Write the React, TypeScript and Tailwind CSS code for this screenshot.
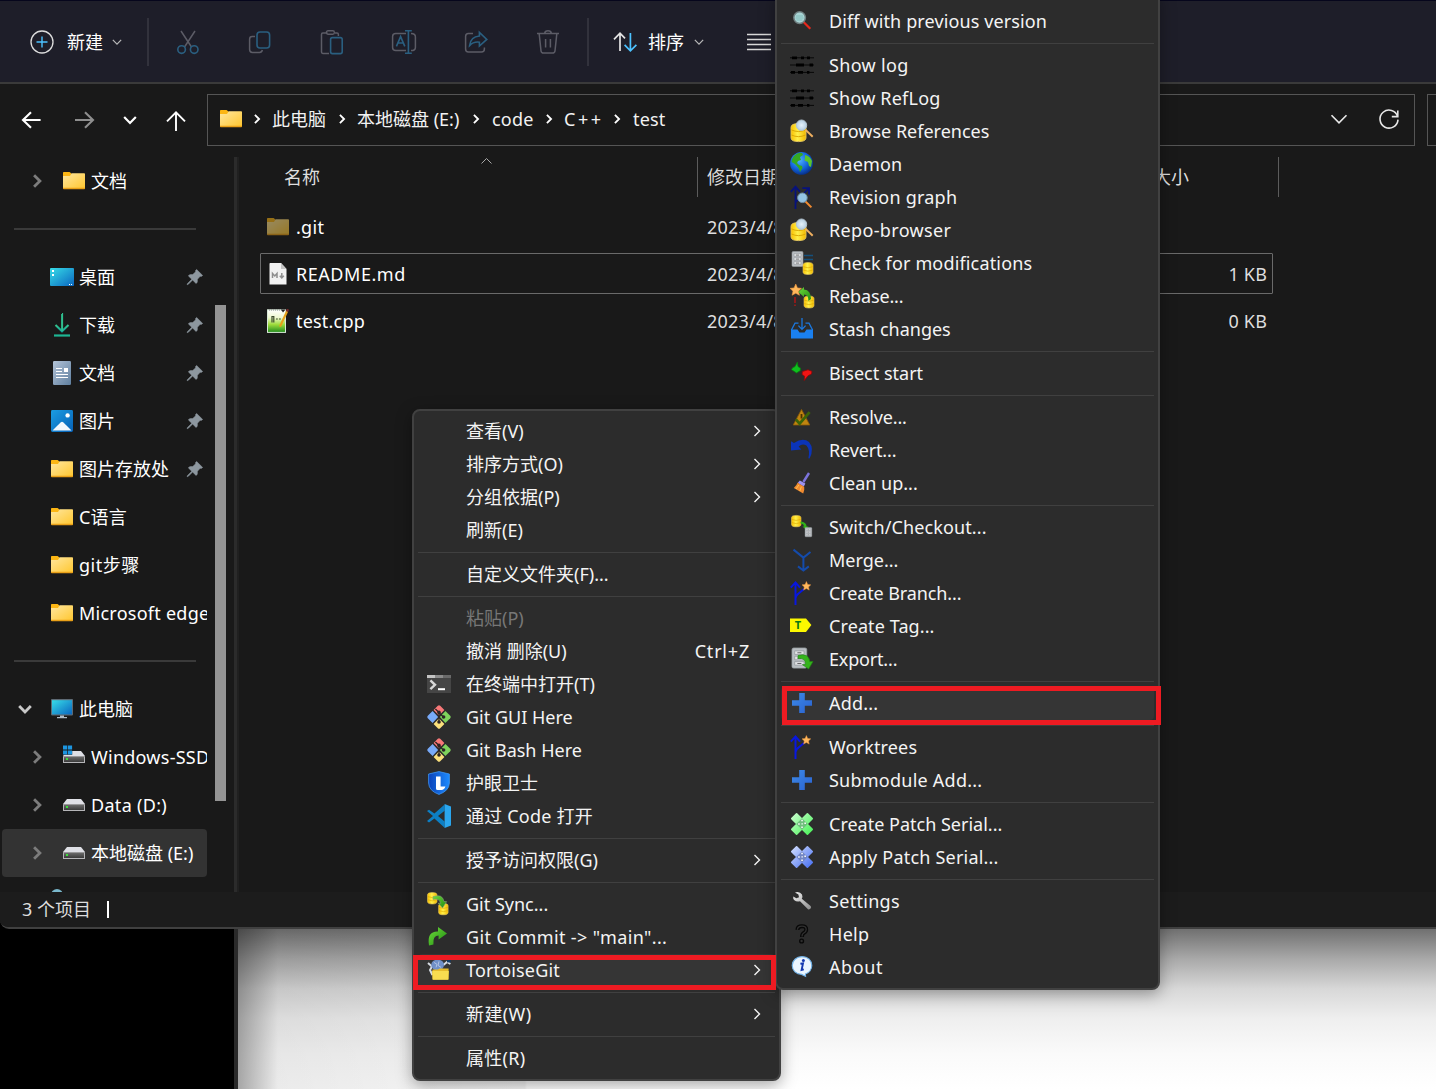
import React from "react";

type IconProps = { className?: string };

function Svg({ children, className = "", box = "0 0 24 24" }: { children: React.ReactNode; className?: string; box?: string }) {
  return (
    <svg viewBox={box} fill="none" className={`shrink-0 overflow-visible ${className || "h-6 w-6"}`}>
      {children}
    </svg>
  );
}

function Gradients() {
  return (
    <svg className="absolute h-0 w-0">
      <defs>
        <linearGradient id="folder" x1="0" y1="0" x2="1" y2="1"><stop offset="0" stopColor="#ffe7a0" /><stop offset="1" stopColor="#ffc730" /></linearGradient>
        <linearGradient id="cyan" x1="0" y1="0" x2="1" y2="1"><stop offset="0" stopColor="#37dde8" /><stop offset="1" stopColor="#0a66c0" /></linearGradient>
        <linearGradient id="gold" x1="0" y1="0" x2="1" y2="0"><stop offset="0" stopColor="#f8c000" /><stop offset=".45" stopColor="#fff04a" /><stop offset="1" stopColor="#f0b800" /></linearGradient>
        <linearGradient id="doc" x1="0" y1="0" x2="1" y2="1"><stop offset="0" stopColor="#b4c4d8" /><stop offset="1" stopColor="#5f7f9f" /></linearGradient>
        <linearGradient id="sky" x1="0" y1="0" x2="1" y2="1"><stop offset="0" stopColor="#1b9de2" /><stop offset="1" stopColor="#0560b6" /></linearGradient>
        <linearGradient id="down" x1="0" y1="0" x2="0" y2="1"><stop offset="0" stopColor="#35c58c" /><stop offset="1" stopColor="#12a79c" /></linearGradient>
        <radialGradient id="globe" cx=".4" cy=".35" r=".7"><stop offset="0" stopColor="#4fb4ff" /><stop offset=".6" stopColor="#1160d8" /><stop offset="1" stopColor="#062a7c" /></radialGradient>
        <radialGradient id="lens"><stop offset="0" stopColor="#e6f2fa" /><stop offset="1" stopColor="#b4cde0" /></radialGradient>
        <linearGradient id="leaf" x1="0" y1="0" x2="1" y2="1"><stop offset="0" stopColor="#6fdc3c" /><stop offset="1" stopColor="#1e8a10" /></linearGradient>
        <linearGradient id="drive" x1="0" y1="0" x2="0" y2="1"><stop offset="0" stopColor="#6d6d6d" /><stop offset="1" stopColor="#3a3a3a" /></linearGradient>
        <linearGradient id="notepad" x1="0" y1="0" x2="0" y2="1"><stop offset="0" stopColor="#ffffff" /><stop offset=".35" stopColor="#eef8d0" /><stop offset=".65" stopColor="#9edc3c" /><stop offset="1" stopColor="#1f8a1c" /></linearGradient>
        <linearGradient id="shield" x1="0" y1="0" x2="1" y2="0"><stop offset="0" stopColor="#0b42b8" /><stop offset="1" stopColor="#1d8bff" /></linearGradient>
        <linearGradient id="plus" x1="0" y1="0" x2="1" y2="1"><stop offset="0" stopColor="#3d8ae8" /><stop offset="1" stopColor="#2a62cf" /></linearGradient>
        <linearGradient id="greenPatch" x1="0" y1="0" x2="24" y2="24" gradientUnits="userSpaceOnUse"><stop offset="0" stopColor="#d4ffd8" /><stop offset="1" stopColor="#3cf04c" /></linearGradient>
        <linearGradient id="bluePatch" x1="0" y1="0" x2="24" y2="24" gradientUnits="userSpaceOnUse"><stop offset="0" stopColor="#dce6ff" /><stop offset="1" stopColor="#3c66f0" /></linearGradient>
        <linearGradient id="wrench" x1="0" y1="0" x2="1" y2="1"><stop offset="0" stopColor="#f2f2f2" /><stop offset="1" stopColor="#8c8c8c" /></linearGradient>
      </defs>
    </svg>
  );
}

/* ---------- explorer icons ---------- */

const Folder = ({ className = "" }: IconProps) => (
  <Svg className={`h-[18px] w-[22px] ${className}`} box="0 0 22 18">
    <path d="M0 .8Q0 0 .8 0H6.6L8.4 1.4V5H0Z" fill="#fcb614" />
    <path d="M0 4H7L8.6 1.2H21.2Q22 1.2 22 2V16.4H0Z" fill="url(#folder)" />
    <path d="M0 15.8H22V16.6Q22 17.2 21.2 17.2H.8Q0 17.2 0 16.6Z" fill="#e9a018" />
  </Svg>
);
const Desktop = () => (
  <Svg className="h-[18px] w-6" box="0 0 24 18">
    <rect width="24" height="18" rx="1" fill="url(#cyan)" />
    <path d="M2 2h2v2H2zM2 6h2v2H2zM19 16h1v1h-1zM21 16h1v1h-1z" fill="#fff" />
  </Svg>
);
const Download = () => (
  <Svg>
    <path d="M5.5 12L12 18.3L18.5 12" stroke="url(#down)" strokeWidth="2" />
    <path d="M12 1h.1V18" stroke="#2fbf8f" strokeWidth="2" />
    <path d="M4 22.5H20" stroke="#1db593" strokeWidth="2.2" />
  </Svg>
);
const Doc = () => (
  <Svg>
    <rect x="3" width="18" height="24" rx="1.2" fill="url(#doc)" />
    <path d="M6 7.5h6M6 10.5h6M6 13.5h12M6 16.5h12" stroke="#fff" strokeWidth="1" />
    <path d="M14 7h4v4h-4z" fill="#fff" />
  </Svg>
);
const Picture = () => (
  <Svg className="h-[22px] w-[22px]" box="0 0 22 22">
    <rect width="22" height="22" rx="1.4" fill="url(#sky)" />
    <path d="M1.5 20.6L9.8 12.2Q11 11.2 12.2 12.2L20.5 20.6Z" fill="#f2f8fd" />
    <circle cx="16.6" cy="5.4" r="2.2" fill="#fff" />
  </Svg>
);
const Monitor = () => (
  <Svg className="h-5 w-[22px]" box="0 0 22 20">
    <rect width="22" height="16.4" rx=".8" fill="#5e6a74" />
    <rect x="1" y="1.2" width="20" height="14.2" fill="url(#cyan)" />
    <path d="M9 16.4h4v1.6h3v1.2H6V18h3z" fill="#b0bcc6" />
  </Svg>
);
const Drive = ({ win }: { win?: boolean }) => (
  <Svg className="h-[18px] w-[22px]" box="0 0 22 18">
    <path d="M4 3H18L22 8H0Z" fill="#dfe0e6" />
    <rect y="8" width="22" height="7" rx=".6" fill="#b5b5b8" />
    <rect x="1" y="8.6" width="20" height="5.4" fill="url(#drive)" />
    <rect x="3" y="10" width="2" height="2" fill="#3ae03a" />
    {win && (
      <>
        <path d="M0 -2.6h9.2v9.4H0z" fill="#1a1a1a" />
        <path d="M0 -2.6h4.2v4.2H0zM4.9 -2.6h4.2v4.2H4.9zM0 2.4h4.2v4.2H0zM4.9 2.4h4.2v4.2H4.9z" fill="#1c95e0" />
      </>
    )}
  </Svg>
);
const Pin = () => (
  <Svg className="h-4 w-4" box="0 0 16 16">
    <path d="M9.6 .5L15.6 6.4 14.2 7.4 13.2 7.2 10.4 10.2 10.2 13.4 9 14.4 5.6 11 1 15.6 .2 15.6 .2 14.9 4.8 10.2 1.4 6.9 2.6 5.7 5.8 5.5 8.7 2.8 8.6 1.5Z" fill="#8d979f" stroke="#8d979f" strokeWidth=".6" />
  </Svg>
);
const Markdown = () => (
  <Svg className="h-[22px] w-[18px]" box="0 0 18 22">
    <path d="M1 0H12L17.5 6V21.5H.5V.8Z" fill="#f1f1f1" />
    <path d="M12 0V6H17.5Z" fill="#c4c4c4" />
    <path d="M3.5 15V10.5L5.8 13L8 10.5V15M12.8 10V14.5M10.8 12.8L12.8 15L14.8 12.8" stroke="#8e8e8e" strokeWidth="1.5" />
  </Svg>
);
const CppFile = () => (
  <Svg className="h-6 w-[22px]" box="0 0 22 24">
    <rect x=".5" y=".8" width="18" height="22.6" fill="url(#notepad)" stroke="#d8e8d8" />
    <path d="M2 1h13" stroke="#8a8a8a" strokeWidth="1" strokeDasharray="1 1" />
    <path d="M14 .4L16 3.6L18.5 .4Z" fill="#222" />
    <path d="M5 13.5V7.5h1.8V13.5M9 10h1.8M12 10h1.8" stroke="#3c4a2c" strokeWidth="1.2" />
    <path d="M20.2 2L13 17.6" stroke="#e6a21c" strokeWidth="2.2" />
    <path d="M21 .2L19.9 2.6" stroke="#7c2a2a" strokeWidth="2.4" />
  </Svg>
);

const Chevron = ({ className = "", d, w = 1.3 }: { className?: string; d: "r" | "d" | "u"; w?: number }) => (
  <svg viewBox="0 0 12 12" fill="none" className={`shrink-0 ${className}`}>
    <path d={d === "r" ? "M3.5 1L8.5 6L3.5 11" : d === "d" ? "M1 3.5L6 8.5L11 3.5" : "M1 8.5L6 3.5L11 8.5"} stroke="currentColor" strokeWidth={w} />
  </svg>
);

/* ---------- menu icons ---------- */

const Db = ({ x = 0, y = 0, s = 1 }: { x?: number; y?: number; s?: number }) => (
  <g transform={`translate(${x} ${y}) scale(${s})`}>
    <path d="M0 2.5Q0 0 5 0T10 2.5V9.5Q10 12 5 12T0 9.5Z" fill="url(#gold)" stroke="#e8c860" strokeWidth=".6" />
    <path d="M.3 4.2Q5 6.4 9.7 4.2M.3 7.6Q5 9.8 9.7 7.6" stroke="#d8a400" strokeWidth=".6" />
  </g>
);
const Lens = ({ x, y, r, tint = "url(#lens)", handle = "#f0b060" }: { x: number; y: number; r: number; tint?: string; handle?: string }) => (
  <g>
    <path d={`M${x + r * 0.8} ${y + r * 0.9}L${x + r + 6} ${y + r + 6.4}`} stroke={handle} strokeWidth="2" />
    <circle cx={x} cy={y} r={r} fill={tint} stroke="#b4c4d0" strokeWidth="1" />
  </g>
);
const Star = ({ x = 0, y = 0, s = 1 }: { x?: number; y?: number; s?: number }) => (
  <path transform={`translate(${x} ${y}) scale(${s})`} d="M5 0L6.5 3.4 10 3.8 7.4 6.2 8.2 9.8 5 8 1.8 9.8 2.6 6.2 0 3.8 3.5 3.4Z" fill="#ffb85c" stroke="#f0963c" strokeWidth=".5" />
);

const Diff = () => (
  <Svg>
    <path d="M13.5 13L20.3 19.8" stroke="#e8281c" strokeWidth="2.2" />
    <circle cx="9.6" cy="8.6" r="5.8" fill="#a8d4d4" stroke="#6f7f80" strokeWidth="1.5" />
    <path d="M6 7h7M5.6 9h8M6.4 11h6" stroke="#78b8b4" strokeWidth=".8" />
  </Svg>
);
const Log = () => (
  <Svg>
    <path d="M0 4.8H24M0 12H24M0 19.4H24" stroke="#080808" strokeWidth="1" />
    <path d="M2 4.8h5M11 4.8h3M17 4.8h3M6 12h8M19.5 12h3.5M1 19.4h4M8 19.4h5M17 19.4h2.4" stroke="#000" strokeWidth="2.8" />
  </Svg>
);
const Browse = () => (
  <Svg>
    <Db x={1} y={4.6} s={1.5} />
    <Lens x={11.5} y={6.2} r={5.2} />
  </Svg>
);
const Globe = () => (
  <Svg>
    <circle cx="11.5" cy="11.4" r="11.4" fill="url(#globe)" />
    <path d="M4 4Q8 0 12 1L13 3 10 5 11 8 8 9 7 11 9 13 12 14 12.5 16 10 20 8.6 16 5 12 1.6 10Q1.4 7 4 4Z" fill="#35a822" />
    <path d="M15 3Q20 4 22 9L21 15 19 14 18 10 14.6 8.6 15 5.6Z" fill="#5cc42c" />
  </Svg>
);
const Graph = () => (
  <Svg>
    <path d="M5.5 24V2M.8 6.8L5.5 1.6 10 6.8M6 17L18 4M12.4 3.2H19V9.4" stroke="#07127c" strokeWidth="1.8" />
    <path d="M15.5 16.5L21.4 22.4" stroke="#f08a30" strokeWidth="2" />
    <circle cx="12.4" cy="12.8" r="4.8" fill="#93c3e4" stroke="#6f8ea5" />
  </Svg>
);
const Cabinet = ({ x = 0, y = 0, s = 1 }: { x?: number; y?: number; s?: number }) => (
  <g transform={`translate(${x} ${y}) scale(${s})`}>
    <rect width="11" height="15" rx="1.2" fill="#b9bec2" stroke="#9aa0a4" strokeWidth=".6" />
    <path d="M2 2.2h7v2.6H2zM2 6.2h7v2.6H2zM2 10.2h7v2.6H2z" fill="#e2e4e6" stroke="#8b9196" strokeWidth=".5" />
    <path d="M4 3.6h3M4 7.6h3M4 11.6h3" stroke="#666" strokeWidth=".8" />
  </g>
);
const Check = () => (
  <Svg>
    <Cabinet x={2} y={0.5} />
    <path d="M14 4.5h9M14 8.5h9" stroke="#15507c" strokeWidth="1.4" />
    <Db x={13} y={11.5} />
  </Svg>
);
const Rebase = () => (
  <Svg>
    <Db x={14} y={12} />
    <Star x={0} y={0} s={1.15} />
    <path d="M5 13v6M5 20.5v1.5" stroke="#b41414" strokeWidth="1.4" />
    <path d="M8.4 8L14 3V5.4Q21 6 21 15L18.4 17Q18.6 10.6 14 10.5V13Z" fill="url(#leaf)" />
  </Svg>
);
const Stash = () => (
  <Svg>
    <path d="M12 1V12M8.4 8.6L12 12.4 15.6 8.6M8.5 6.2H5L1.4 13M15.5 6.2H19L22.6 13" stroke="#1a78e0" strokeWidth="1.3" />
    <path d="M1 12.5H7.5L9.5 15.5H14.5L16.5 12.5H23V21.5H1Z" fill="#1a80f0" />
  </Svg>
);
const Bisect = () => (
  <Svg>
    <path d="M7.4 1L8 5.5 10.4 7V9.6L6.5 12 1.4 8.6 2.8 6.6 5 5.6Z" fill="#0fc01e" stroke="#0a7a10" strokeWidth=".8" />
    <path d="M12.4 10.5L18 8.8 22 10.4 21.4 13 18 14.8 14.2 19.6 14.6 15.2 12 13.4Z" fill="#f01414" stroke="#900808" strokeWidth=".8" />
  </Svg>
);
const Resolve = () => (
  <Svg>
    <path d="M11.5 4.4L19.8 20H3.2Z" fill="#c08410" stroke="#8a5a05" strokeWidth=".8" />
    <path d="M11.5 9V13.5" stroke="#4a3400" strokeWidth="1.8" />
    <path d="M5.8 14.4L9.6 18.6L19.6 7.2" stroke="#3c6408" strokeWidth="2.8" />
  </Svg>
);
const Revert = () => (
  <Svg>
    <path d="M1 3.2L4 5Q13 -1 19 4 24.6 10.6 19.6 20.6L18.4 20.2Q20.4 12 16.4 7.6 12.6 4.8 8.6 8.4L11.4 11.4 1 12.4Z" fill="#0b34b8" />
  </Svg>
);
const Broom = () => (
  <Svg>
    <path d="M19 2L13.4 11" stroke="#7c74dc" strokeWidth="2.4" />
    <path d="M9.8 9.4L15.4 12.6 13.8 15.6 7.6 12Z" fill="#9d92f0" />
    <path d="M7.6 11.8L14.2 15.8Q14.8 19.6 13.2 22.4L3.8 17Q6.6 14.6 7.6 11.8Z" fill="#f08a30" />
    <path d="M8.8 14L6 18M11.4 15.6L9.8 20" stroke="#ffc04a" />
  </Svg>
);
const Switch = () => (
  <Svg>
    <Db x={1.5} y={0.4} s={0.95} />
    <path d="M10.5 6.4Q16.4 7 16.6 11.4H18.6L15.8 14.6 12.4 11.4H14.2Q13.6 8.8 10.5 8.6Z" fill="#2fae18" />
    <Cabinet x={15} y={12.5} s={0.62} />
  </Svg>
);
const Merge = () => (
  <Svg>
    <path d="M3.5 1.6L13.4 9.6L20.5 4M13.4 9.6V22M8 18.4L13.4 22.6 18.8 18.4" stroke="#144bab" strokeWidth="2" />
  </Svg>
);
const Branch = () => (
  <Svg>
    <path d="M5.5 24V2M.8 6.6L5.5 1.4 10 6.6M5.8 16.5Q6 15 8 13L14 8" stroke="#0817e0" strokeWidth="2" />
    <Star x={12} y={0.5} s={0.88} />
  </Svg>
);
const Tag = () => (
  <Svg>
    <path d="M0 4.4H16L21.4 11L16 18H0Z" fill="#fcf800" />
    <text x="8" y="15.2" textAnchor="middle" className="font-bold text-[11px]" fill="#0a7a14">T</text>
  </Svg>
);
const Export = () => (
  <Svg>
    <Cabinet x={2} y={1} s={1.34} />
    <path d="M8 8.6Q18.6 5.4 19.8 14.6H23L18.6 22 12.4 17.6H15.6Q15.6 10.6 8 11.4Z" fill="#35b41c" stroke="#1e8412" strokeWidth=".6" />
  </Svg>
);
const Plus = () => (
  <Svg>
    <path d="M9.2 2H14.8V9.2H22V14.8H14.8V22H9.2V14.8H2V9.2H9.2Z" fill="url(#plus)" />
  </Svg>
);
const Patch = ({ color }: { color: "green" | "blue" }) => {
  const fill = color === "green" ? "url(#greenPatch)" : "url(#bluePatch)";
  return (
    <Svg>
      <path d="M1.2 6L6 1.2Q6.6 .6 7.2 1.2L22.8 16.8Q23.4 17.4 22.8 18L18 22.8Q17.4 23.4 16.8 22.8L1.2 7.2Q.6 6.6 1.2 6Z" fill={fill} />
      <path d="M18 1.2L22.8 6Q23.4 6.6 22.8 7.2L7.2 22.8Q6.6 23.4 6 22.8L1.2 18Q.6 17.4 1.2 16.8L16.8 1.2Q17.4 .6 18 1.2Z" fill={fill} />
      <path d="M12 6.2L17.8 12 12 17.8 6.2 12Z" fill={color === "green" ? "#6fbf7c" : "#7286c4"} />
      <path d="M11.3 7.8h1.5v1.5h-1.5zM8.2 11.3h1.5v1.5H8.2zM14.4 10.6h1.5v1.5h-1.5zM11.5 11.2h1.3v1.3h-1.3zM11.3 14.6h1.5v1.5h-1.5z" fill="#fff" />
    </Svg>
  );
};
const Wrench = () => (
  <Svg>
    <path d="M5 3.4Q9.8 2 12 5.6 13 8 11.8 9.8L20.6 17Q21.6 18.4 20.6 19.6T18 20.2L10 12.2Q6.6 13.2 4.4 11.2 2.8 9.6 3.2 7.4L6.4 9.2 9 8.2 8.4 5.4Z" fill="url(#wrench)" />
  </Svg>
);
const Help = () => (
  <Svg>
    <path d="M7.4 7.8Q7.6 4.2 12 4.2T16.2 7.8Q16.2 9.8 13.8 11 12 12 12 15" stroke="#080808" strokeWidth="4" />
    <path d="M7.4 7.8Q7.6 4.2 12 4.2T16.2 7.8Q16.2 9.8 13.8 11 12 12 12 14.4" stroke="#303030" strokeWidth="1.3" />
    <circle cx="11.6" cy="19" r="1.9" fill="#2e2e2e" stroke="#080808" strokeWidth="1.4" />
  </Svg>
);
const About = () => (
  <Svg>
    <path d="M12 1.6C18 1.6 21.8 5.6 21.8 10.6 21.8 14.6 19 18 15.4 19L15.6 21.4 11.6 19.4C6.4 19.2 2.2 15.6 2.2 10.6 2.2 5.6 6.4 1.6 12 1.6Z" fill="#eaf5ff" stroke="#6fb0e6" strokeWidth="1.1" />
    <path d="M10.4 8.8L13 8.4 11.6 15 13.8 14.4" stroke="#1438b0" strokeWidth="1.9" />
    <circle cx="13.4" cy="5.4" r="1.5" fill="#1438b0" />
  </Svg>
);
const Terminal = () => (
  <Svg>
    <rect y="3" width="24" height="18" fill="#454545" />
    <path d="M0 3h8v3H0z" fill="#c4c4c4" /><path d="M8 3h8v3H8z" fill="#8c8c8c" /><path d="M16 3h8v3h-8z" fill="#6a6a6a" />
    <path d="M3.4 8.4L8 12.8 3.4 17.2" stroke="#d8d8d8" strokeWidth="2.4" /><path d="M11 17.2h7" stroke="#fff" strokeWidth="2" />
  </Svg>
);
const Git = () => (
  <Svg>
    <path d="M10.8 .8Q12 -.4 13.2 .8L17.4 5 12 10.4 6.6 5Z" fill="#f87878" />
    <path d="M23.2 10.8Q24.4 12 23.2 13.2L18.4 18 12.9 12 18.4 6Z" fill="#7fd35c" />
    <path d="M.8 10.8Q-.4 12 .8 13.2L5.6 18 11.1 12 5.6 6Z" fill="#78aaf8" />
    <path d="M10.8 23.2Q12 24.4 13.2 23.2L17.4 19 12 13.6 6.6 19Z" fill="#fbe07c" />
    <path d="M8.4 4L12 7.6V17M12 7.6L16.4 12" stroke="#2b2424" strokeWidth="1.3" />
    <circle cx="12" cy="7.4" r="1.8" fill="#2b2424" /><circle cx="12" cy="17" r="1.8" fill="#2b2424" /><circle cx="16.6" cy="12" r="1.8" fill="#2b2424" />
  </Svg>
);
const Shield = () => (
  <Svg>
    <path d="M12 .6L22.4 3V12Q22 20 12 23.4 2 20 1.6 12V3Z" fill="url(#shield)" stroke="#3c96f4" strokeWidth=".8" />
    <path d="M9 5.4H13.6V15.4H18.4Q17.4 18.8 14.4 19H10.6Q9 19 9 17.4Z" fill="#fff" />
  </Svg>
);
const VsCode = () => (
  <Svg>
    <path d="M17.6 .4L7.4 9.6 2 5.8 0 7 6 12 0 17 2 18.6 7.4 14.6 17.6 23.8V17.4L11 12 17.6 6.8Z" fill="#0d7fc4" />
    <path d="M17.6 0L24 2.6V21.4L17.6 24Z" fill="#2aa6ee" />
  </Svg>
);
const Sync = () => (
  <Svg>
    <Db x={0.5} y={0.6} s={0.95} />
    <Db x={11.6} y={11.4} s={0.95} />
    <path d="M6 4.6Q15.6 1.4 17 9.6H19.6L15.6 16 11.2 11.2H13.6Q12.4 6 6 7.4Z" fill="url(#leaf)" stroke="#8a9c80" strokeWidth=".6" />
  </Svg>
);
const Commit = () => (
  <Svg>
    <path d="M2 20.4Q-.4 6 11 6.4V2L20 8.4 11.6 14.4V10.6Q5.6 10.6 6.4 19.4Z" fill="url(#leaf)" />
  </Svg>
);
const Tortoise = () => (
  <Svg>
    <path d="M1 5L5 8.4 3 12 5.4 17M16.4 7L20 4 23.4 6" stroke="#d8dde4" strokeWidth="2" />
    <ellipse cx="10.6" cy="7" rx="6.4" ry="5.6" fill="#7090c8" />
    <path d="M7 4.4l3 2-1 3M12 3.4l-1 4 3 2" stroke="#b4c4e4" strokeWidth="1" />
    <path d="M20 1h3.6v3.4H20z" fill="#123a66" />
    <path d="M5.4 11.4H11L12.6 10.4H21.6V21.6H5.4Z" fill="#e6bc2c" />
    <path d="M5.2 13H21.8L21.2 21.8H5.8Z" fill="#f8dc50" />
  </Svg>
);

/* ---------- menus ---------- */

type Item = { label: string; icon?: React.ReactNode; sub?: boolean; hint?: string; disabled?: boolean; active?: boolean; track?: string } | "-";

const mainMenu: Item[] = [
  { label: "查看(V)", sub: true },
  { label: "排序方式(O)", sub: true },
  { label: "分组依据(P)", sub: true },
  { label: "刷新(E)" },
  "-",
  { label: "自定义文件夹(F)..." },
  "-",
  { label: "粘贴(P)", disabled: true },
  { label: "撤消 删除(U)", hint: "Ctrl+Z" },
  { label: "在终端中打开(T)", icon: <Terminal /> },
  { label: "Git GUI Here", icon: <Git /> },
  { label: "Git Bash Here", icon: <Git /> },
  { label: "护眼卫士", icon: <Shield /> },
  { label: "通过 Code 打开", icon: <VsCode />, track: "tracking-[0.2px]" },
  "-",
  { label: "授予访问权限(G)", sub: true },
  "-",
  { label: "Git Sync...", icon: <Sync /> },
  { label: 'Git Commit -> "main"...', icon: <Commit />, track: "tracking-[0.38px]" },
  { label: "TortoiseGit", icon: <Tortoise />, sub: true, active: true, track: "tracking-[0.16px]" },
  "-",
  { label: "新建(W)", sub: true, track: "tracking-[0.4px]" },
  "-",
  { label: "属性(R)", track: "tracking-[0.3px]" },
];

const gitMenu: Item[] = [
  { label: "Diff with previous version", icon: <Diff />, track: "tracking-[0.12px]" },
  "-",
  { label: "Show log", icon: <Log />, track: "tracking-[0.35px]" },
  { label: "Show RefLog", icon: <Log />, track: "tracking-[0.2px]" },
  { label: "Browse References", icon: <Browse /> },
  { label: "Daemon", icon: <Globe />, track: "tracking-[0.2px]" },
  { label: "Revision graph", icon: <Graph />, track: "tracking-[0.22px]" },
  { label: "Repo-browser", icon: <Browse />, track: "tracking-[0.35px]" },
  { label: "Check for modifications", icon: <Check />, track: "tracking-[0.16px]" },
  { label: "Rebase...", icon: <Rebase />, track: "tracking-[-0.15px]" },
  { label: "Stash changes", icon: <Stash /> },
  "-",
  { label: "Bisect start", icon: <Bisect /> },
  "-",
  { label: "Resolve...", icon: <Resolve />, track: "tracking-[-0.15px]" },
  { label: "Revert...", icon: <Revert />, track: "tracking-[-0.15px]" },
  { label: "Clean up...", icon: <Broom /> },
  "-",
  { label: "Switch/Checkout...", icon: <Switch />, track: "tracking-[0.12px]" },
  { label: "Merge...", icon: <Merge /> },
  { label: "Create Branch...", icon: <Branch />, track: "tracking-[-0.12px]" },
  { label: "Create Tag...", icon: <Tag />, track: "tracking-[0.1px]" },
  { label: "Export...", icon: <Export />, track: "tracking-[-0.18px]" },
  "-",
  { label: "Add...", icon: <Plus />, active: true, track: "tracking-[0.2px]" },
  "-",
  { label: "Worktrees", icon: <Branch />, track: "tracking-[0.15px]" },
  { label: "Submodule Add...", icon: <Plus />, track: "tracking-[0.24px]" },
  "-",
  { label: "Create Patch Serial...", icon: <Patch color="green" /> },
  { label: "Apply Patch Serial...", icon: <Patch color="blue" />, track: "tracking-[0.2px]" },
  "-",
  { label: "Settings", icon: <Wrench />, track: "tracking-[0.3px]" },
  { label: "Help", icon: <Help />, track: "tracking-[0.3px]" },
  { label: "About", icon: <About />, track: "tracking-[0.6px]" },
];

function MenuList({ items, rowPad }: { items: Item[]; rowPad: string }) {
  return (
    <>
      {items.map((it, i) =>
        it === "-" ? (
          <div key={i} className="flex h-[11px] items-center pl-1 pr-1"><div className="h-px w-full bg-[#404040]" /></div>
        ) : (
          <div key={i} className={`mx-1 flex h-[33px] items-center gap-[15px] pb-px ${rowPad} ${it.active ? "rounded bg-[#353535]" : ""} ${it.disabled ? "text-[#777777]" : "text-[#f4f4f4]"}`}>
            <div className="h-6 w-6 shrink-0">{it.icon}</div>
            <span className={`grow whitespace-nowrap ${it.track ?? ""}`}>{it.label}</span>
            {it.hint && <span className="mr-[13px] tracking-[0.8px]">{it.hint}</span>}
            {it.sub && <Chevron d="r" className="h-3 w-3" w={1.4} />}
          </div>
        )
      )}
    </>
  );
}

/* ---------- explorer ---------- */

function ToolIcon({ children }: { children: React.ReactNode }) {
  return <div className="flex w-[72px] justify-center"><Svg>{children}</Svg></div>;
}

function Toolbar() {
  const g = "#5c5c66";
  const b = "#2a5f80";
  return (
    <div className="flex h-[84px] items-center border-b-2 border-t border-b-[#3a3a3a] border-t-[#06061c] bg-[#1e1e29] text-white">
      <div className="flex w-[147px] items-center pl-[30px]">
        <Svg><circle cx="12" cy="12" r="11" stroke="#dcdcdc" strokeWidth="1.3" /><path d="M12 6.5V17.5M6.5 12H17.5" stroke="#4cc2ff" strokeWidth="1.4" /></Svg>
        <span className="ml-[13px]">新建</span>
        <Chevron d="d" className="ml-[9px] h-2.5 w-2.5 text-[#b8b8b8]" w={1.5} />
      </div>
      <div className="h-12 w-0.5 bg-[#32323c]" />
      <div className="flex w-[438px] pl-[3px]">
        <ToolIcon><path d="M5 1L15.5 17M19 1L8.5 17" stroke={g} strokeWidth="1.5" /><circle cx="5.6" cy="19.6" r="3.8" stroke={b} strokeWidth="1.6" /><circle cx="18.2" cy="19.6" r="3.8" stroke={b} strokeWidth="1.6" /></ToolIcon>
        <ToolIcon><path d="M7 6.5H4.2Q1.6 6.5 1.6 9.2V19.5Q1.6 22.4 4.4 22.4H11.6Q13.8 22.4 14.4 20" stroke={g} strokeWidth="1.5" /><rect x="9" y="2" width="12.6" height="16" rx="3" stroke={b} strokeWidth="1.6" /></ToolIcon>
        <ToolIcon><path d="M7.5 3H2.8Q1.5 3 1.5 4.4V22Q1.5 23.4 2.8 23.4H9M15 3H17Q18.4 3 18.4 4.4V6" stroke={g} strokeWidth="1.5" /><rect x="6.4" y=".8" width="8" height="3.4" rx="1.6" stroke={g} strokeWidth="1.4" /><rect x="10.6" y="7.6" width="11.6" height="16" rx="1.8" stroke={b} strokeWidth="1.6" /></ToolIcon>
        <ToolIcon><path d="M14 3.4H3.8Q.6 3.4 .6 6.4V17.6Q.6 20.6 3.8 20.6H14M19 3.4Q23.4 3.4 23.4 6.8V17.4Q23.4 20.6 19 20.6" stroke={g} strokeWidth="1.5" /><path d="M4.4 16.4L8.6 6.6 12.8 16.4M5.8 13H11.4M16.4 1V23M13 .8H19.8M13 23.2H19.8" stroke={b} strokeWidth="1.6" /></ToolIcon>
        <ToolIcon><path d="M9 3.4H4.4Q1.6 3.4 1.6 6.4V19Q1.6 22 4.4 22H17.4Q20.4 22 20.4 19V17.4" stroke={g} strokeWidth="1.5" /><path d="M5.6 15.6Q6.6 6.6 15.4 6V2.4L22.8 9.4 15.4 16V12.2Q9.6 11.4 5.6 15.6Z" stroke={b} strokeWidth="1.6" /></ToolIcon>
        <ToolIcon><path d="M1 3.6H23M8.6 3.4Q9 .8 12 .8T15.4 3.4M3.2 3.8L5 20.8Q5.4 23 7.4 23H16.6Q18.6 23 19 20.8L20.8 3.8M9.6 9V17.4M14.4 9V17.4" stroke={g} strokeWidth="1.5" /></ToolIcon>
      </div>
      <div className="h-12 w-0.5 bg-[#32323c]" />
      <Svg className="ml-6 h-6 w-6"><path d="M7 21V3.5M1 9.4L7 3.2 12 8.4" stroke="#e4e4e4" strokeWidth="1.7" /><path d="M17.4 3V20.5M11.6 14.8L17.4 20.8 23.4 14.8" stroke="#4cc2ff" strokeWidth="1.7" /></Svg>
      <span className="ml-[11px]">排序</span>
      <Chevron d="d" className="ml-[10px] h-2.5 w-2.5 text-[#b8b8b8]" w={1.5} />
      <Svg className="ml-[43px] h-6 w-6"><path d="M0 4.5H24M0 9.5H24M0 14.5H24M0 19.5H24" stroke="#d8d8d8" strokeWidth="1.6" /></Svg>
    </div>
  );
}

const CrumbSep = () => <Chevron d="r" className="ml-[10px] h-2.5 w-2.5 text-white" w={2.2} />;

function AddressBar() {
  return (
    <div className="flex h-[73px] items-start pt-[10px] text-[#f2f2f2]">
      <div className="flex h-[52px] w-[207px] shrink-0 items-center pb-px pl-5">
        <Svg><path d="M20.6 12H3M11 4.2L3 12 11 19.8" stroke="#fff" strokeWidth="2.1" /></Svg>
        <Svg className="ml-[29px] h-6 w-6"><path d="M2 12H20M12 4.2L20 12 12 19.8" stroke="#8f8f8f" strokeWidth="2.1" /></Svg>
        <Chevron d="d" className="ml-[26px] h-[14px] w-[14px] text-white" w={1.9} />
        <Svg className="ml-[27px] h-6 w-6"><path d="M12 23V4.4M3 13.4L12 4.4 21 13.4" stroke="#fff" strokeWidth="1.9" /></Svg>
      </div>
      <div className="flex h-[52px] w-[1208px] shrink-0 items-center border border-[#555555] pb-0.5 pl-3">
        <Folder />
        <CrumbSep />
        <span className="ml-[10px] w-[55px] whitespace-nowrap">此电脑</span>
        <CrumbSep />
        <span className="ml-[10px] w-[104px] whitespace-nowrap">本地磁盘 (E:)</span>
        <CrumbSep />
        <span className="ml-[11px] w-[42px] whitespace-nowrap tracking-[0.2px]">code</span>
        <CrumbSep />
        <span className="ml-[10px] w-[38px] whitespace-nowrap tracking-[2.6px]">C++</span>
        <CrumbSep />
        <span className="ml-[11px] grow tracking-[0.2px]">test</span>
        <Chevron d="d" className="mr-[29px] h-[18px] w-[18px] text-[#e8e8e8]" w={1.1} />
        <Svg className="mr-[13px] h-6 w-6"><path d="M20.6 9.4A9 9 0 1 0 21 12.6M20.8 3.4V9.6H14.8" stroke="#e8e8e8" strokeWidth="1.6" /></Svg>
      </div>
      <div className="ml-3 h-[52px] w-5 shrink-0 border border-[#555555]" />
    </div>
  );
}

function Nav({ icon, label, pin, indent, arrow, selected, track = "" }: { icon: React.ReactNode; label: string; pin?: boolean; indent?: boolean; arrow?: "r" | "d"; selected?: boolean; track?: string }) {
  return (
    <div className={`ml-0.5 flex h-12 shrink-0 items-center overflow-hidden ${selected ? "rounded-sm bg-[#333333]" : ""}`}>
      <div className={`flex shrink-0 justify-end ${indent ? "w-[42px]" : "w-[30px]"}`}>
        {arrow && <Chevron d={arrow} className={`h-3.5 w-3.5 ${arrow === "d" ? "text-[#c8c8c8]" : "text-[#7c7c7c]"}`} w={2.4} />}
      </div>
      <div className={`flex w-6 shrink-0 justify-center ${indent ? "ml-[18px]" : "ml-[18px]"}`}>{icon}</div>
      <span className={`grow whitespace-nowrap text-white ml-[5px] ${track}`}>{label}</span>
      {pin && <div className="mr-1"><Pin /></div>}
    </div>
  );
}

const Rule = () => <div className="flex h-12 shrink-0 items-center pl-[14px]"><div className="h-0.5 w-[182px] bg-[#3a3a3a]" /></div>;

function Sidebar() {
  return (
    <div className="flex w-[234px] shrink-0 overflow-hidden">
      <div className="flex h-full w-[207px] flex-col overflow-hidden">
        <Nav indent arrow="r" icon={<Folder />} label="文档" />
        <Rule />
        <Nav icon={<Desktop />} label="桌面" pin />
        <Nav icon={<Download />} label="下载" pin />
        <Nav icon={<Doc />} label="文档" pin />
        <Nav icon={<Picture />} label="图片" pin />
        <Nav icon={<Folder />} label="图片存放处" pin />
        <Nav icon={<Folder />} label="C语言" track="tracking-[0.2px]" />
        <Nav icon={<Folder />} label="git步骤" track="tracking-[0.5px]" />
        <Nav icon={<Folder />} label="Microsoft edge" track="tracking-[0.25px]" />
        <Rule />
        <Nav arrow="d" icon={<Monitor />} label="此电脑" />
        <Nav indent arrow="r" icon={<Drive win />} label="Windows-SSD" track="tracking-[0.25px]" />
        <Nav indent arrow="r" icon={<Drive />} label="Data (D:)" track="tracking-[0.3px]" />
        <Nav indent arrow="r" icon={<Drive />} label="本地磁盘 (E:)" selected />
        <div className="ml-[51px] mt-3 h-3 w-3 shrink-0 rounded-full bg-[#7ab8cc]" />
      </div>
      <div className="ml-2 mt-[148px] h-[496px] w-[11px] bg-[#949494]" />
    </div>
  );
}

function FileRow({ icon, name, date, size, selected, track = "" }: { icon: React.ReactNode; name: string; date: string; size?: string; selected?: boolean; track?: string }) {
  return (
    <div className={`mb-1.5 flex h-[41px] w-[1013px] items-center border pr-[5px] ${selected ? "rounded-[1px] border-[#6a6a6a]" : "border-transparent"}`}>
      <div className="ml-[5px] flex w-6 shrink-0 justify-center">{icon}</div>
      <span className={`ml-1.5 w-[411px] text-white ${track}`}>{name}</span>
      <span className="grow whitespace-nowrap tracking-[0.2px] text-[#dedede]">{date}</span>
      <span className="tracking-[0.15px] text-[#dedede]">{size}</span>
    </div>
  );
}

export default function App() {
  return (
    <div className="relative h-[1089px] w-[1436px] overflow-hidden bg-black font-['Noto_Sans','Noto_Sans_CJK_SC',sans-serif] text-[18px] leading-6">
      <Gradients />
      <div className="flex h-full flex-col">
        <div className="flex h-[929px] shrink-0 flex-col overflow-hidden rounded-bl-[9px] border-b-2 border-[#404040] bg-[#191919]">
          <Toolbar />
          <AddressBar />
          <div className="flex h-[735px] shrink-0">
            <Sidebar />
            <div className="w-[5px] shrink-0 border-r-2 border-[#202020] bg-[#2b2b2b]" />
            <div className="flex grow flex-col pl-[21px]">
              <div className="flex h-[49px] items-start text-[#dedede]">
                <span className="ml-6 mt-2 w-[193px]">名称</span>
                <Chevron d="u" className="-mt-0.5 h-3 w-[19px] text-[#a8a8a8]" w={1} />
                <div className="ml-[201px] h-10 w-px bg-[#5c5c5c]" />
                <span className="ml-[9px] mt-2 w-[446px]">修改日期</span>
                <span className="mt-2">大小</span>
                <div className="ml-[89px] h-10 w-px bg-[#5c5c5c]" />
              </div>
              <FileRow icon={<Folder className="opacity-55" />} name=".git" date="2023/4/8 15:20" track="tracking-[0.3px]" />
              <FileRow icon={<Markdown />} name="README.md" date="2023/4/8 15:20" size="1 KB" selected track="tracking-[0.55px]" />
              <FileRow icon={<CppFile />} name="test.cpp" date="2023/4/8 15:21" size="0 KB" track="tracking-[0.2px]" />
            </div>
          </div>
          <div className="flex h-[35px] shrink-0 items-center bg-[#1c1c1c] pl-[22px] text-[#dedede]">
            <span className="w-[85px] pb-0.5">3 个项目</span>
            <div className="h-[17px] w-0.5 bg-white" />
          </div>
        </div>
        <div className="flex grow">
          <div className="w-[234px] bg-black" />
          <div className="w-1 bg-[#2a2a2a]" />
          <div className="grow bg-[linear-gradient(to_bottom,#707070_0px,#a9a9a9_30px,#d8d8d8_60px,#efefef_90px,#fafafa_125px,#ffffff_160px)]">
            <div className="h-full bg-[linear-gradient(to_right,rgba(0,0,0,0.35)_0px,rgba(0,0,0,0.08)_40px,rgba(0,0,0,0.04)_287px,transparent_289px)]" />
          </div>
        </div>
      </div>

      <div className="absolute left-[412px] top-[409px] h-[672px] w-[369px] rounded-lg border-2 border-[#414141] bg-[#2c2c2c] pt-1 shadow-[0_4px_16px_rgba(0,0,0,0.35)]">
        <MenuList items={mainMenu} rowPad="pl-[9px] pr-[12px]" />
      </div>
      <div className="absolute -top-2 left-[775px] h-[998px] w-[385px] rounded-lg border-2 border-[#414141] bg-[#2c2c2c] pt-[11px] shadow-[0_4px_16px_rgba(0,0,0,0.35)]">
        <MenuList items={gitMenu} rowPad="pl-[9px]" />
      </div>
      <div className="absolute left-[413px] top-[955px] h-[35px] w-[363px] border-[5px] border-[#ee1b22]" />
      <div className="absolute left-[782px] top-[686px] h-[39px] w-[379px] border-[5px] border-[#ee1b22]" />
    </div>
  );
}
